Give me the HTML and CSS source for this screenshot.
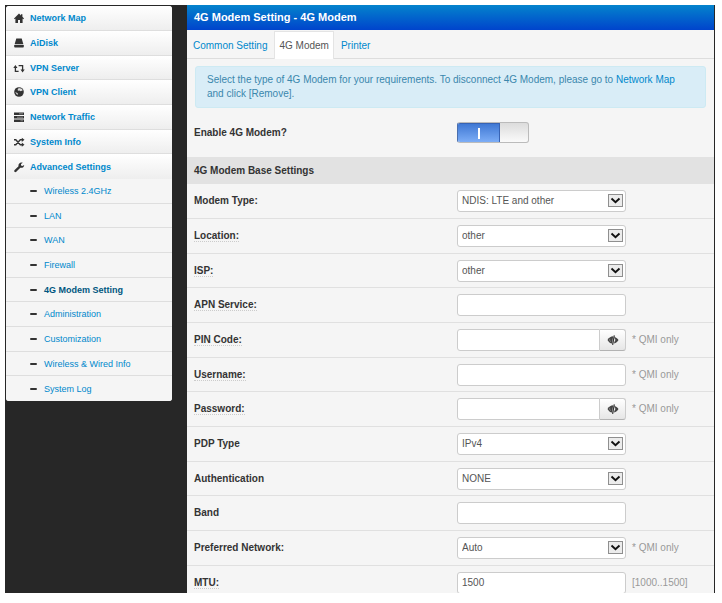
FILE: index.html
```
<!DOCTYPE html>
<html lang="en">
<head>
  <meta charset="UTF-8" />
  <title>4G Modem Setting - 4G Modem</title>
  <meta name="viewport" content="width=device-width, initial-scale=1.0" />
  <link rel="stylesheet" href="styles.css">
</head>
<body>
  <!-- Shared icons -->
  <svg class="sprite" aria-hidden="true">
    <symbol id="arrow" viewBox="0 0 15 13">
      <rect x="0.5" y="0.5" width="14" height="12" fill="#ececec" stroke="#8f8f8f" />
      <path d="M3.500 4.500L7.500 8.200L11.500 4.500" fill="none" stroke="#111" stroke-width="1.900" />
    </symbol>
    <symbol id="eye" viewBox="0 0 12 10">
      <path d="M0.500 5C2 2.500 4 1.300 6.200 1.300L5 8.600C3.200 8.300 1.500 7 0.500 5z" fill="#444" />
      <path d="M7.500 2C9.300 2.500 10.700 3.600 11.500 5C10.500 6.800 9 7.900 7 8.500L7.400 6.800C8.600 5.800 8.700 4 7.300 3z" fill="#444" />
      <path d="M7.300 0.300L5.600 9.800" stroke="#333" stroke-width="1.200" />
      <path d="M2.800 3.800C2.500 5 2.900 6 3.700 6.700" fill="none" stroke="#aaa" stroke-width="0.700" />
    </symbol>
  </svg>

  <div class="app">
    <!-- Side menu -->
    <nav class="sidebar">
      <ul class="menu">
        <li><a href="#">
          <svg class="icon" viewBox="0 0 12 12"><path d="M6 1.500L1 6.400L1.700 7.200L2.400 6.600V11H5V8H7V11H9.600V6.600L10.300 7.200L11 6.400L9.400 4.800V2.200H8V3.400z" /></svg>Network Map</a></li>
        <li><a href="#">
          <svg class="icon" viewBox="0 0 12 12"><path d="M3.300 1.500H8.700L10.300 7H1.700z" /><rect x="1.200" y="7.700" width="9.600" height="2.800" rx="0.800" /></svg>AiDisk</a></li>
        <li><a href="#">
          <svg class="icon" viewBox="0 0 12 12"><path d="M2.400 6V9.300H5.600 M5.600 3.700H9.600V8" fill="none" stroke="#333" stroke-width="1.300" /><path d="M0.300 6L2.400 3L4.500 6z M7.500 7.500L9.600 10.500L11.700 7.500z" /></svg>VPN Server</a></li>
        <li><a href="#">
          <svg class="icon" viewBox="0 0 12 12"><circle cx="6" cy="6" r="4.800" /><path d="M5.800 2L8.800 2.700L9.800 4.300L7.800 5.200L6.400 4.400L5 4.800L4.600 3.400z M2.200 6L4.800 7.200L4.400 9.200z" fill="#ddd" /></svg>VPN Client</a></li>
        <li><a href="#">
          <svg class="icon" viewBox="0 0 12 12"><path d="M1 1.500H11V4H1z M1 5H11V7.500H1z M1 8.500H11V11H1z" /><path d="M6 2.800H10 M4 6.200H10 M7.500 9.800H10" stroke="#999" stroke-width="0.800" /></svg>Network Traffic</a></li>
        <li><a href="#">
          <svg class="icon" viewBox="0 0 12 12"><path d="M1 3.800H2.800L7.300 8.700H9.300 M1 8.700H2.800L7.300 3.800H9.300" fill="none" stroke="#333" stroke-width="1.400" /><path d="M8.800 1.700L11.500 3.800L8.800 5.900z M8.800 6.600L11.500 8.700L8.800 10.800z" /></svg>System Info</a></li>
        <li class="open"><a href="#">
          <svg class="icon" viewBox="0 0 12 12"><path d="M1.400 9.300L5.500 5.200C5.100 3.300 6.500 1.400 8.800 1.500L9.800 1.800L8 3.100L8.100 4.500L9.300 5L11.200 3.900C11.100 6.100 9.200 7.200 7.300 6.700L3 11C1.900 11.600 0.700 10.400 1.400 9.300z" /></svg>Advanced Settings</a></li>
        <li class="sub"><a href="#">Wireless 2.4GHz</a></li>
        <li class="sub"><a href="#">LAN</a></li>
        <li class="sub"><a href="#">WAN</a></li>
        <li class="sub"><a href="#">Firewall</a></li>
        <li class="sub current"><a href="#">4G Modem Setting</a></li>
        <li class="sub"><a href="#">Administration</a></li>
        <li class="sub"><a href="#">Customization</a></li>
        <li class="sub"><a href="#">Wireless &amp; Wired Info</a></li>
        <li class="sub"><a href="#">System Log</a></li>
      </ul>
    </nav>

    <!-- Settings -->
    <main class="panel">
      <h1 class="panel-title">4G Modem Setting - 4G Modem</h1>
      <nav class="tabs">
        <a href="#">Common Setting</a>
        <a href="#" class="active">4G Modem</a>
        <a href="#">Printer</a>
      </nav>
      <div class="alert">Select the type of 4G Modem for your requirements. To disconnect 4G Modem, please go to <a href="#">Network Map</a> and click [Remove].</div>

      <form>
        <div class="row row-enable">
          <label for="enable">Enable 4G Modem?</label>
          <input type="checkbox" id="enable" class="toggle" checked />
        </div>

        <h2 class="section-title">4G Modem Base Settings</h2>
        <div class="rows">
          <div class="row">
            <label for="modemType">Modem Type:</label>
            <div class="field select">
              <select id="modemType"><option>NDIS: LTE and other</option></select>
              <svg class="arrow"><use href="#arrow" /></svg>
            </div>
          </div>
          <div class="row">
            <label for="location"><span class="help">Location:</span></label>
            <div class="field select">
              <select id="location"><option>other</option></select>
              <svg class="arrow"><use href="#arrow" /></svg>
            </div>
          </div>
          <div class="row">
            <label for="isp"><span class="help">ISP:</span></label>
            <div class="field select">
              <select id="isp"><option>other</option></select>
              <svg class="arrow"><use href="#arrow" /></svg>
            </div>
          </div>
          <div class="row">
            <label for="apn"><span class="help">APN Service:</span></label>
            <div class="field"><input type="text" id="apn" /></div>
          </div>
          <div class="row">
            <label for="pin"><span class="help">PIN Code:</span></label>
            <div class="field secret">
              <input type="password" id="pin" />
              <button type="button" aria-label="Show PIN code"><svg class="eye"><use href="#eye" /></svg></button>
            </div>
            <span class="note">* QMI only</span>
          </div>
          <div class="row">
            <label for="username"><span class="help">Username:</span></label>
            <div class="field"><input type="text" id="username" /></div>
            <span class="note">* QMI only</span>
          </div>
          <div class="row">
            <label for="password"><span class="help">Password:</span></label>
            <div class="field secret">
              <input type="password" id="password" />
              <button type="button" aria-label="Show password"><svg class="eye"><use href="#eye" /></svg></button>
            </div>
            <span class="note">* QMI only</span>
          </div>
          <div class="row">
            <label for="pdp">PDP Type</label>
            <div class="field select">
              <select id="pdp"><option>IPv4</option></select>
              <svg class="arrow"><use href="#arrow" /></svg>
            </div>
          </div>
          <div class="row">
            <label for="auth">Authentication</label>
            <div class="field select">
              <select id="auth"><option>NONE</option></select>
              <svg class="arrow"><use href="#arrow" /></svg>
            </div>
          </div>
          <div class="row">
            <label for="band">Band</label>
            <div class="field"><input type="text" id="band" /></div>
          </div>
          <div class="row">
            <label for="network">Preferred Network:</label>
            <div class="field select">
              <select id="network"><option>Auto</option></select>
              <svg class="arrow"><use href="#arrow" /></svg>
            </div>
            <span class="note">* QMI only</span>
          </div>
          <div class="row">
            <label for="mtu"><span class="help">MTU:</span></label>
            <div class="field"><input type="text" id="mtu" value="1500" /></div>
            <span class="note">[1000..1500]</span>
          </div>
        </div>
      </form>
    </main>
  </div>
</body>
</html>
```

FILE: styles.css
```
* {
  box-sizing: border-box;
}

body {
  margin: 0;
  padding: 5px 7px 10px 5px;
  height: 100vh;
  background: #fff;
  color: #333;
  font-family: "Liberation Sans", Arial, sans-serif;
  font-size: 10px;
  line-height: 14px;
}

a {
  color: #0088cc;
  text-decoration: none;
}

.sprite {
  position: absolute;
  width: 0;
  height: 0;
}

.app {
  display: flex;
  align-items: flex-start;
  gap: 15px;
  height: 100%;
  padding: 0 1px;
  overflow: hidden;
  background: #272727;
}

/* Side menu */
.sidebar {
  flex: 0 0 166px;
  padding-top: 1px;
}

.menu {
  list-style: none;
  margin: 0;
  padding: 0;
  border-radius: 3px;
  overflow: hidden;
  background: #f5f5f5;
}

.menu li {
  height: 25px;
  border-bottom: 1px solid #dedede;
  background: linear-gradient(#fff, #eeeeee);
}

.menu li:nth-child(3n) {
  height: 24px;
}

.menu li:last-child {
  border-bottom: none;
}

.menu a {
  display: flex;
  align-items: center;
  height: 100%;
  padding-left: 7px;
  font-size: 9px;
  font-weight: bold;
}

.menu .open {
  border-bottom: none;
}

.menu .sub {
  background: #f5f5f5;
}

.menu .sub a {
  padding-left: 24px;
  font-weight: normal;
}

.menu .sub a::before {
  content: "";
  width: 7px;
  height: 2px;
  margin-right: 7px;
  border-radius: 1px;
  background: #333;
}

.menu .current a {
  color: #005580;
  font-weight: bold;
}

.icon {
  width: 12px;
  height: 12px;
  margin-right: 5px;
  fill: #333;
}

/* Settings panel */
.panel {
  flex: 1;
  min-width: 0;
  background: #f5f5f5;
}

.panel-title {
  margin: 0;
  padding-left: 7px;
  font-size: 11px;
  line-height: 25px;
  color: #fff;
  background: linear-gradient(#0483cc, #0044cc);
}

.tabs {
  display: flex;
  gap: 2px;
  height: 29px;
  padding: 1px 1px 0;
  border-bottom: 1px solid #ddd;
}

.tabs a {
  height: 28px;
  padding: 0 4px;
  border: 1px solid transparent;
  border-bottom: none;
  line-height: 27px;
}

.tabs .active {
  color: #555;
  background: #fff;
  border-color: #e4e4e4;
}

.alert {
  margin: 7px 8px 0;
  padding: 6px 11px;
  border: 1px solid #cdeaf3;
  border-radius: 3px;
  color: #3a87ad;
  background: #d9edf7;
}

.row {
  display: flex;
  align-items: center;
  height: 35px;
  padding-left: 7px;
  border-bottom: 1px solid #e0e0e0;
}

.rows .row:nth-child(3n) {
  height: 34px;
}

.row-enable {
  height: 49px;
  border-bottom: none;
}

.row label {
  flex: 0 0 263px;
  font-weight: bold;
}

.help {
  border-bottom: 1px dotted #ccc;
}

.section-title {
  margin: 0;
  padding-left: 7px;
  font-size: 10px;
  line-height: 27px;
  background: #e2e2e2;
}

/* Form controls */
.toggle {
  appearance: none;
  display: flex;
  align-items: center;
  width: 72px;
  height: 21px;
  margin: 0;
  border: 1px solid #bbb;
  border-radius: 3px;
  overflow: hidden;
  background: linear-gradient(#dcdcdc, #fafafa);
}

.toggle:checked {
  border-left-color: #4a6fae;
}

.toggle:checked::before {
  content: "";
  width: 41px;
  height: 19px;
  border-top: 1px solid #3763b4;
  border-right: 1px solid #3763b4;
  background: linear-gradient(#fff, #fff) center / 2px 11px no-repeat, linear-gradient(#3f78d4, #80b0f8);
}

.field {
  position: relative;
  display: flex;
  width: 169px;
  height: 22px;
}

.field input,
.field select {
  appearance: none;
  width: 100%;
  min-width: 0;
  height: 22px;
  margin: 0;
  padding: 0 4px;
  border: 1px solid #ccc;
  border-radius: 3px;
  background: #fff;
  color: #555;
  font: inherit;
}

.field select {
  padding-right: 20px;
}

.arrow {
  position: absolute;
  top: 4px;
  right: 3px;
  width: 15px;
  height: 13px;
  pointer-events: none;
}

.secret input {
  border-radius: 3px 0 0 3px;
}

.secret button {
  display: flex;
  align-items: center;
  justify-content: center;
  flex: 0 0 26px;
  padding: 0;
  border: 1px solid #ccc;
  border-left: none;
  border-bottom-color: #b3b3b3;
  border-radius: 0 3px 3px 0;
  background: linear-gradient(#fff, #e6e6e6);
}

.eye {
  width: 12px;
  height: 10px;
}

.note {
  margin-left: 6px;
  color: #999;
}
```
